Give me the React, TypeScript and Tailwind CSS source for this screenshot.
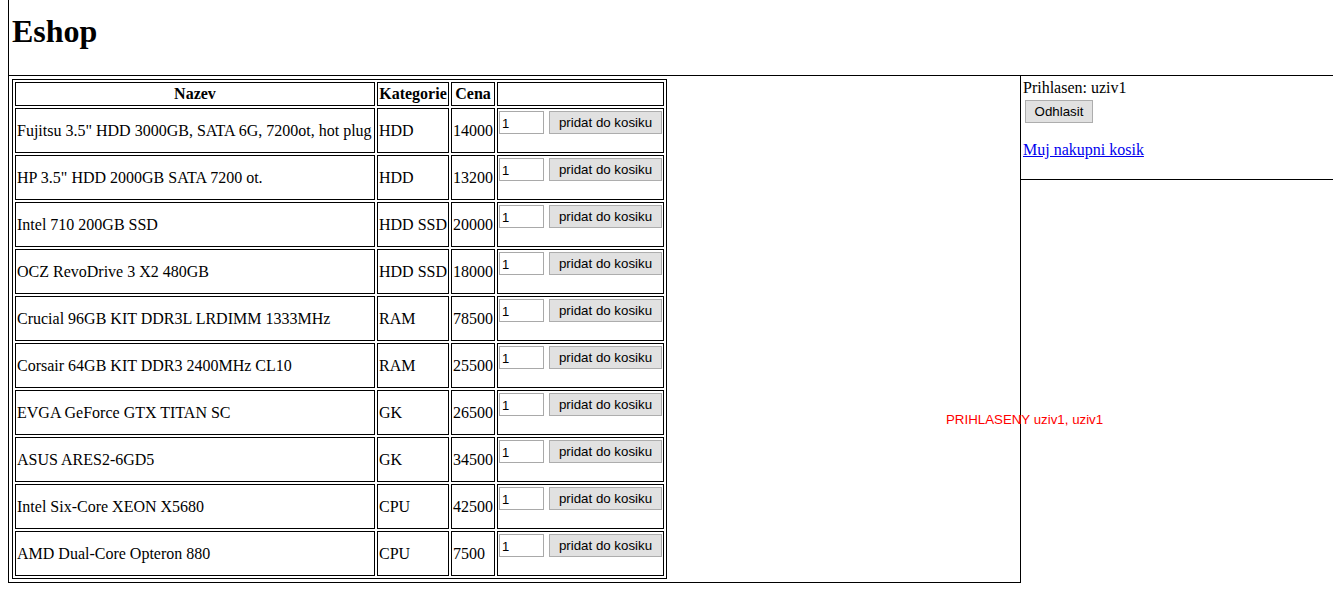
import React from "react";

const rows: [string, string, string][] = [
  ['Fujitsu 3.5" HDD 3000GB, SATA 6G, 7200ot, hot plug', "HDD", "14000"],
  ['HP 3.5" HDD 2000GB SATA 7200 ot.', "HDD", "13200"],
  ["Intel 710 200GB SSD", "HDD SSD", "20000"],
  ["OCZ RevoDrive 3 X2 480GB", "HDD SSD", "18000"],
  ["Crucial 96GB KIT DDR3L LRDIMM 1333MHz", "RAM", "78500"],
  ["Corsair 64GB KIT DDR3 2400MHz CL10", "RAM", "25500"],
  ["EVGA GeForce GTX TITAN SC", "GK", "26500"],
  ["ASUS ARES2-6GD5", "GK", "34500"],
  ["Intel Six-Core XEON X5680", "CPU", "42500"],
  ["AMD Dual-Core Opteron 880", "CPU", "7500"],
];

const serif = "font-['Liberation_Serif',serif]";

export default function App() {
  return (
    <div className={`relative w-[1333px] h-[592px] overflow-hidden bg-white text-black ${serif}`}>
      <div className="ml-2 border-l border-black">
        <header className="h-[76px] border-b border-black pl-[3px] pt-[13px]">
          <h1 className="text-[32px] leading-[37px] font-bold">Eshop</h1>
        </header>
        <div className="flex items-start">
          <main className="w-[1012px] border-r border-b border-black p-[3px]">
            <table className="table-fixed w-[655px] border-separate border-spacing-[2px] border border-black text-[16px]">
              <colgroup>
                <col className="w-[360px]" />
                <col className="w-[72px]" />
                <col className="w-[44px]" />
                <col className="w-[167px]" />
              </colgroup>
              <thead>
                <tr>
                  <th className="border border-black p-[1px] leading-[20px] font-bold text-center whitespace-nowrap">Nazev</th>
                  <th className="border border-black p-[1px] leading-[20px] font-bold text-center whitespace-nowrap">Kategorie</th>
                  <th className="border border-black p-[1px] leading-[20px] font-bold text-center whitespace-nowrap">Cena</th>
                  <th className="border border-black p-[1px] leading-[20px]"></th>
                </tr>
              </thead>
              <tbody>
                {rows.map(([name, cat, price]) => (
                  <tr key={name}>
                    <td className="border border-black p-[1px] align-middle whitespace-nowrap overflow-hidden">{name}</td>
                    <td className="border border-black p-[1px] align-middle whitespace-nowrap">{cat}</td>
                    <td className="border border-black p-[1px] align-middle whitespace-nowrap">{price}</td>
                    <td className="border border-black p-[1px] align-top">
                      <div className="h-[41px] pt-[1px] flex items-start gap-[5px] font-['Liberation_Sans',sans-serif] text-[13px]">
                        <input
                          type="text"
                          defaultValue="1"
                          className="w-[45px] h-[23px] border border-[#a9a9a9] bg-white px-[2px] pt-[2px] text-[13px] leading-[17px] outline-none"
                        />
                        <button className="w-[113px] h-[23px] border border-[#adadad] bg-[#e1e1e1] pt-[1px] text-[13.3px] leading-[20px] text-black">
                          pridat do kosiku
                        </button>
                      </div>
                    </td>
                  </tr>
                ))}
              </tbody>
            </table>
          </main>
          <aside className="flex-1 h-[104px] border-b border-black pl-[2px] pt-[3px] text-[16px]">
            <div className="leading-[18px]">Prihlasen: uziv1</div>
            <button className="mt-[3px] ml-[2px] w-[68px] h-[23px] border border-[#adadad] bg-[#e1e1e1] pt-[1px] font-['Liberation_Sans',sans-serif] text-[13.3px] leading-[20px] text-black">
              Odhlasit
            </button>
            <div className="mt-[18px] leading-[18px]">
              <a href="#" className="text-[#0000ee] underline">Muj nakupni kosik</a>
            </div>
          </aside>
        </div>
      </div>
      <div className="absolute left-[946px] top-[412px] font-['Liberation_Sans',sans-serif] text-[13.3px] leading-[15px] text-[#ff0000] whitespace-nowrap">
        PRIHLASENY uziv1, uziv1
      </div>
    </div>
  );
}
